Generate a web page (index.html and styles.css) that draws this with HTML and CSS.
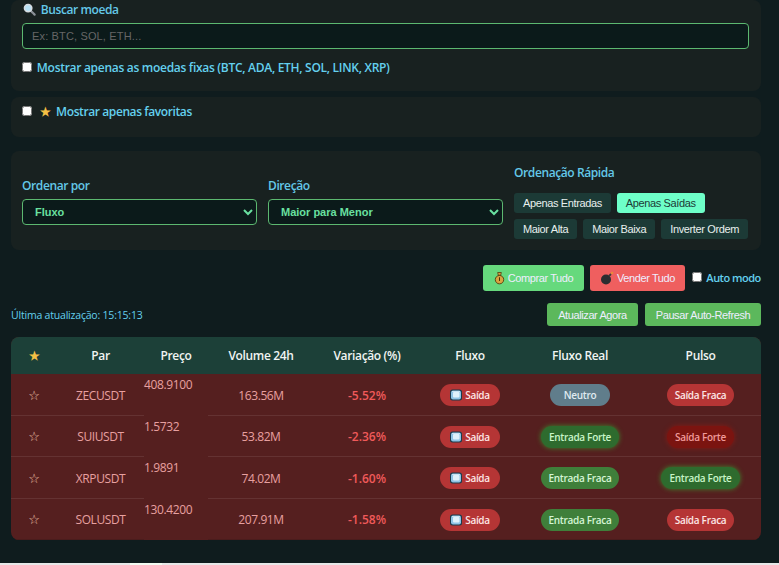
FILE: index.html
```html
<!DOCTYPE html>
<html lang="pt-BR">
<head>
    <meta charset="UTF-8">
    <meta name="viewport" content="width=device-width, initial-scale=1.0">
    <title>Painel de moedas</title>
    <link rel="stylesheet" href="styles.css">
</head>
<body>
    <svg class="defs" width="0" height="0">
        <symbol id="ice" viewBox="0 0 12 12">
            <rect x="0" y="0.5" width="12" height="11" rx="2.5" fill="#1d3a4a"/>
            <rect x="1" y="1.5" width="10" height="9" rx="2" fill="#8fc4e6"/>
            <rect x="3" y="3" width="6.5" height="5.5" rx="1" fill="#dff1fb"/>
            <path d="M2 2.500h8" stroke="#c6e4f6" stroke-width="1"/>
        </symbol>
    </svg>
    <main class="pagina">
        <section class="painel painel-busca">
            <label class="titulo" for="busca">
                <svg class="ico-lupa" viewBox="0 0 14 14" width="13" height="13"><path d="M8.500 8.500l4 4" stroke="#8a8f96" stroke-width="2.400" stroke-linecap="round"/><circle cx="5.500" cy="5.500" r="4" fill="#b9e2f5" stroke="#d7dde2" stroke-width="1.600"/></svg>
                Buscar moeda
            </label>
            <input class="campo" id="busca" type="text" placeholder="Ex: BTC, SOL, ETH...">
            <label class="opcao"><input type="checkbox"> Mostrar apenas as moedas fixas (BTC, ADA, ETH, SOL, LINK, XRP)</label>
        </section>

        <section class="painel painel-fav">
            <label class="opcao"><input type="checkbox"> <span class="estrela">★</span> Mostrar apenas favoritas</label>
        </section>

        <section class="painel painel-ordem">
            <div class="grupo">
                <label class="titulo" for="ordenar">Ordenar por</label>
                <select class="campo seletor" id="ordenar"><option>Fluxo</option></select>
            </div>
            <div class="grupo">
                <label class="titulo" for="direcao">Direção</label>
                <select class="campo seletor" id="direcao"><option>Maior para Menor</option></select>
            </div>
            <div class="grupo-rapido">
                <div class="titulo">Ordenação Rápida</div>
                <div class="botoes-rapidos">
                    <button class="rapido">Apenas Entradas</button>
                    <button class="rapido ativo">Apenas Saídas</button>
                    <button class="rapido">Maior Alta</button>
                    <button class="rapido">Maior Baixa</button>
                    <button class="rapido">Inverter Ordem</button>
                </div>
            </div>
        </section>

        <div class="acoes">
            <button class="btn btn-comprar">
                <svg viewBox="0 0 12 14" width="11" height="14"><path d="M4 1h4L7.300 4h-2.600z" fill="#d9a441" stroke="#4a3208" stroke-width=".8"/><circle cx="6" cy="8.800" r="4.600" fill="#d9a441" stroke="#4a3208" stroke-width=".9"/><path d="M6 6.200v4" stroke="#4a3208" stroke-width="1.100"/></svg>
                Comprar Tudo
            </button>
            <button class="btn btn-vender">
                <svg viewBox="0 0 14 14" width="14" height="14"><circle cx="6" cy="8.500" r="5" fill="#2b2d30"/><path d="M9 5l2-2" stroke="#3a3a3a" stroke-width="1.800"/><circle cx="12" cy="2" r="1.300" fill="#e9893a"/></svg>
                Vender Tudo
            </button>
            <label class="opcao auto"><input type="checkbox"> Auto modo</label>
        </div>

        <div class="status">
            <span class="atualizacao">Última atualização: 15:15:13</span>
            <div class="status-botoes">
                <button class="btn btn-refresh">Atualizar Agora</button>
                <button class="btn btn-refresh btn-pausar">Pausar Auto-Refresh</button>
            </div>
        </div>

        <table class="tabela">
            <colgroup>
                <col class="c-fav"><col class="c-par"><col class="c-preco"><col class="c-vol">
                <col class="c-var"><col class="c-fluxo"><col class="c-real"><col class="c-pulso">
            </colgroup>
            <thead>
                <tr>
                    <th class="estrela">★</th><th>Par</th><th>Preço</th><th>Volume 24h</th>
                    <th>Variação (%)</th><th>Fluxo</th><th>Fluxo Real</th><th>Pulso</th>
                </tr>
            </thead>
            <tbody>
                <tr>
                    <td class="fav">☆</td><td>ZECUSDT</td><td class="preco">408.9100</td><td>163.56M</td>
                    <td class="variacao">-5.52%</td>
                    <td><span class="pill saida-fraca saida-gelo"><svg width="12" height="12"><use href="#ice"/></svg>Saída</span></td>
                    <td><span class="pill neutro">Neutro</span></td>
                    <td><span class="pill saida-fraca">Saída Fraca</span></td>
                </tr>
                <tr>
                    <td class="fav">☆</td><td>SUIUSDT</td><td class="preco">1.5732</td><td>53.82M</td>
                    <td class="variacao">-2.36%</td>
                    <td><span class="pill saida-fraca saida-gelo"><svg width="12" height="12"><use href="#ice"/></svg>Saída</span></td>
                    <td><span class="pill entrada-forte">Entrada Forte</span></td>
                    <td><span class="pill saida-forte">Saída Forte</span></td>
                </tr>
                <tr>
                    <td class="fav">☆</td><td>XRPUSDT</td><td class="preco">1.9891</td><td>74.02M</td>
                    <td class="variacao">-1.60%</td>
                    <td><span class="pill saida-fraca saida-gelo"><svg width="12" height="12"><use href="#ice"/></svg>Saída</span></td>
                    <td><span class="pill entrada-fraca">Entrada Fraca</span></td>
                    <td><span class="pill entrada-forte">Entrada Forte</span></td>
                </tr>
                <tr>
                    <td class="fav">☆</td><td>SOLUSDT</td><td class="preco">130.4200</td><td>207.91M</td>
                    <td class="variacao">-1.58%</td>
                    <td><span class="pill saida-fraca saida-gelo"><svg width="12" height="12"><use href="#ice"/></svg>Saída</span></td>
                    <td><span class="pill entrada-fraca">Entrada Fraca</span></td>
                    <td><span class="pill saida-fraca">Saída Fraca</span></td>
                </tr>
            </tbody>
        </table>
    </main>
    <div class="faixa"><span></span></div>
</body>
</html>
```

FILE: styles.css
```css
* {
    box-sizing: border-box;
    margin: 0;
    padding: 0;
}

html {
    background: #e6e8e8;
}

body {
    font-family: "Open Sans", "Noto Sans", sans-serif;
    font-size: 12px;
    color: #e0e0e0;
    overflow: hidden;
    height: 565px;
}

.defs {
    display: block;
    height: 0;
}

.pagina {
    background: #0f1c1e;
    height: 563px;
    padding: 0 18px 0 11px;
}

.faixa {
    height: 2px;
    padding-left: 130px;
}

.faixa span {
    display: block;
    width: 32px;
    height: 2px;
    background: #f1fbf1;
}

.painel {
    background: #182120;
    border-radius: 8px;
}

.painel-busca {
    height: 91px;
    padding: 2px 11px 0;
    margin-bottom: 6px;
}

.painel-fav {
    height: 40px;
    padding: 7px 11px 0;
    margin-bottom: 14px;
}

.painel-ordem {
    height: 99px;
    padding: 1px 11px 0;
    display: flex;
    align-items: center;
    gap: 11px;
    margin-bottom: 15px;
}

.titulo {
    display: block;
    font-weight: 600;
    font-size: 12px;
    line-height: 16px;
    letter-spacing: -0.4px;
    color: #64c8e8;
}

.ico-lupa {
    margin: 0 2px 0 1px;
    vertical-align: -2px;
}

.campo {
    display: block;
    width: 727px;
    height: 26px;
    margin-top: 5px;
    background: #0b1a1a;
    border: 1px solid #5cb870;
    border-radius: 4px;
    padding: 0 9px;
    font-family: "Liberation Sans", sans-serif;
    font-size: 11px;
    letter-spacing: 0.15px;
    color: #69e0a0;
}

.campo::placeholder {
    color: #666;
}

.seletor {
    width: 235px;
    padding: 0 8px;
    font-weight: 600;
    letter-spacing: 0;
}

.opcao {
    display: block;
    font-weight: 600;
    font-size: 12px;
    line-height: 16px;
    letter-spacing: -0.29px;
    color: #64d0ee;
}

.painel-busca .opcao {
    margin-top: 11px;
}

.opcao input {
    width: 10px;
    height: 10px;
    margin-right: 2px;
}

.painel-fav .opcao {
    letter-spacing: -0.4px;
}

.painel-fav .opcao input {
    margin-right: 5px;
}

.painel-fav .estrela {
    margin-right: 3px;
}

.estrela {
    color: #f5c045;
}

.grupo-rapido {
    margin-top: 2px;
}

.botoes-rapidos {
    display: flex;
    flex-wrap: wrap;
    gap: 6px;
    width: 235px;
    margin-top: 12px;
}

.rapido {
    height: 20px;
    padding: 0 9px;
    border: 0;
    border-radius: 3px;
    background: #1c3a36;
    color: #e8f0ee;
    font-family: "Liberation Sans", sans-serif;
    font-size: 11px;
    letter-spacing: -0.37px;
}

.rapido.ativo {
    background: #6effc8;
    color: #1c3a36;
}

.acoes {
    display: flex;
    justify-content: flex-end;
    align-items: center;
    height: 26px;
    gap: 6px;
}

.btn {
    border: 0;
    border-radius: 3px;
    font-family: "Liberation Sans", sans-serif;
    font-size: 11px;
    letter-spacing: -0.4px;
    color: #eef;
}

.btn-comprar,
.btn-vender {
    height: 26px;
    display: flex;
    align-items: center;
    justify-content: center;
    gap: 3px;
}

.btn-comprar {
    width: 101px;
    background: #66d97d;
}

.btn-vender {
    width: 95px;
    background: #ef5f5f;
}

.auto {
    width: 69px;
    margin-left: 1px;
    font-size: 11px;
    letter-spacing: -0.5px;
    white-space: nowrap;
}

.status {
    display: flex;
    justify-content: space-between;
    align-items: center;
    height: 23px;
    margin-top: 12px;
    margin-bottom: 11px;
}

.atualizacao {
    font-size: 10.500px;
    letter-spacing: -0.2px;
    color: #64d0ee;
}

.status-botoes {
    display: flex;
    gap: 7px;
}

.btn-refresh {
    height: 23px;
    width: 91px;
    background: #5cb85c;
}

.btn-pausar {
    width: 116px;
}

.tabela {
    width: 750px;
    table-layout: fixed;
    border-collapse: separate;
    border-spacing: 0;
    border-radius: 8px;
    overflow: hidden;
    background: #551f1f;
    text-align: center;
}

.c-fav { width: 46px; }
.c-par { width: 87px; }
.c-preco { width: 64px; }
.c-vol { width: 106px; }
.c-var { width: 106px; }
.c-fluxo { width: 100px; }
.c-real { width: 120px; }
.c-pulso { width: 121px; }

.tabela th {
    height: 37px;
    background: #1c4038;
    color: #f0f4f2;
    font-weight: 600;
    font-size: 12px;
    letter-spacing: -0.35px;
}

.tabela th.estrela {
    color: #f5c045;
}

.tabela td {
    height: 41.500px;
    padding-top: 2px;
    border-bottom: 1px solid #643232;
    color: #e8a0a0;
    font-size: 12px;
    letter-spacing: -0.4px;
}

.tabela tr:last-child td {
    border-bottom-color: #4a1c1c;
}

.tabela .preco {
    vertical-align: top;
    text-align: left;
    border-bottom: 0;
    padding-top: 2px;
    letter-spacing: -0.35px;
}

.tabela .fav {
    color: #f0c8b0;
    font-family: "DejaVu Sans", sans-serif;
    font-size: 13px;
}

.tabela .variacao {
    color: #f05a5a;
    font-weight: 600;
    letter-spacing: 0;
}

.pill {
    display: inline-flex;
    align-items: center;
    justify-content: center;
    gap: 3px;
    height: 22px;
    padding: 0 8px;
    border-radius: 11px;
    font-size: 10px;
    font-weight: 600;
    letter-spacing: -0.3px;
    white-space: nowrap;
}

.saida-fraca {
    background: #b53535;
    color: #fde6e6;
}

.saida-gelo {
    padding: 0 10px;
}

.neutro {
    background: #607d8b;
    color: #dfeaf0;
    padding: 0 14px;
}

.entrada-fraca {
    background: #3f7f3a;
    color: #d5f5d5;
}

.entrada-forte {
    background: #2e6b2e;
    color: #c8f5c8;
    box-shadow: 0 0 5px #3d8a2e;
}

.saida-forte {
    background: #7b1410;
    color: #f09a9a;
    box-shadow: 0 0 5px #8a1a14;
}
```
